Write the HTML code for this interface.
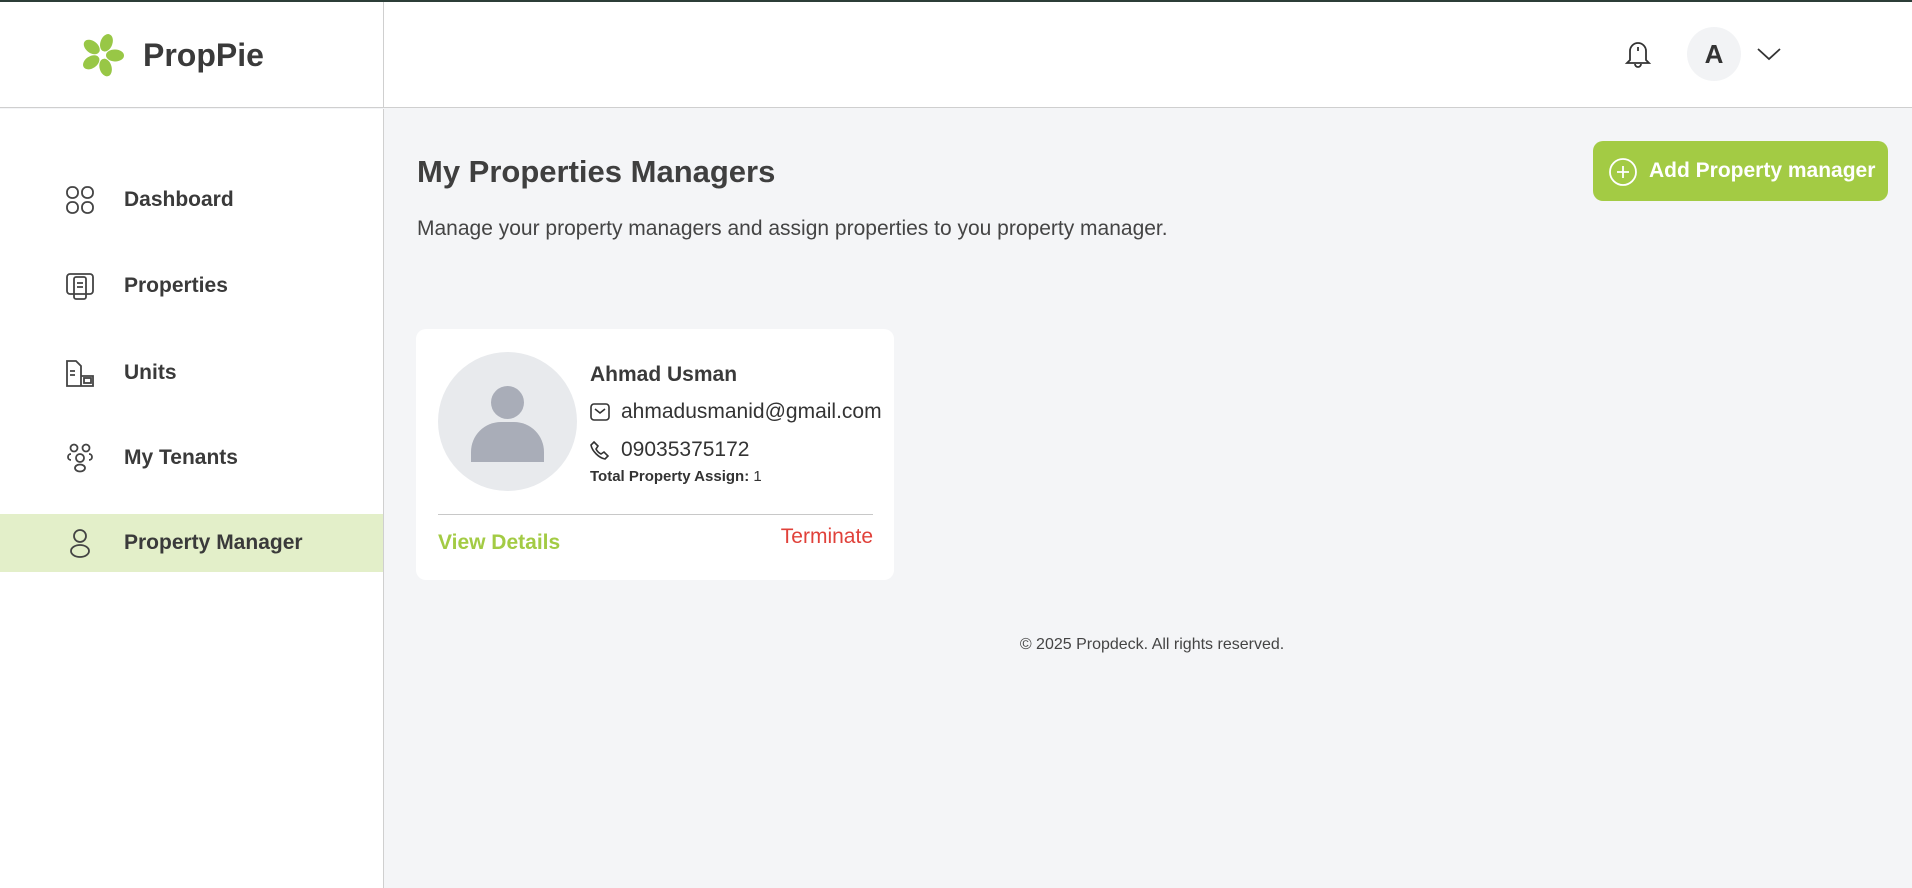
<!DOCTYPE html>
<html><head><meta charset="utf-8"><style>
*{box-sizing:border-box;margin:0;padding:0}
body{width:1912px;height:888px;overflow:hidden;background:#f4f5f7;font-family:"Liberation Sans",sans-serif;color:#3a3a3a;position:relative}
.topline{position:absolute;left:0;top:0;width:1912px;height:2px;background:#2c3e38}
.header{position:absolute;left:0;top:2px;width:1912px;height:106px;background:#fff;border-bottom:1px solid #cfcfcf}
.side{position:absolute;left:0;top:109px;width:384px;height:779px;background:#fff;border-right:1px solid #cfcfcf}
.hdiv{position:absolute;left:383px;top:2px;width:1px;height:106px;background:#cfcfcf}
.logo{position:absolute;left:143px;top:37px;font-size:32px;font-weight:600;color:#3a3a3a}
.nav{position:absolute;left:0;width:383px;height:58px;display:flex;align-items:center}
.nav svg{position:absolute;left:64px}
.nav span{position:absolute;left:124px;font-size:21px;font-weight:600;color:#3a3a3a}
.active{background:#e3efc9}
.abs{position:absolute}
</style></head><body>
<div class="topline"></div>
<div class="header"></div>
<div class="hdiv"></div>
<svg class="abs" style="left:80px;top:33px" width="44" height="44" viewBox="0 0 44 44">
<g fill="#98c746">
<ellipse cx="22" cy="9" rx="6" ry="9" transform="rotate(20 22 22)"/>
<ellipse cx="22" cy="9" rx="6" ry="9" transform="rotate(92 22 22)"/>
<ellipse cx="22" cy="9" rx="6" ry="9" transform="rotate(164 22 22)"/>
<ellipse cx="22" cy="9" rx="6" ry="9" transform="rotate(236 22 22)"/>
<ellipse cx="22" cy="9" rx="6" ry="9" transform="rotate(308 22 22)"/>
</g><circle cx="22" cy="22" r="4" fill="#fff"/></svg>
<div class="logo">PropPie</div>
<svg class="abs" style="left:1624px;top:38px" width="28" height="32" viewBox="0 0 28 32" fill="none" stroke="#333" stroke-width="1.8"><path d="M6 22V13a8 8 0 0116 0v9l3 3H3z"/><path d="M11 26a3 3 0 006 0"/><path d="M14 9v4"/></svg>
<div class="abs" style="left:1687px;top:27px;width:54px;height:54px;border-radius:50%;background:#f2f3f5;text-align:center;line-height:54px;font-size:26px;font-weight:600;color:#333">A</div>
<svg class="abs" style="left:1756px;top:46px" width="26" height="16" viewBox="0 0 26 16" fill="none" stroke="#333" stroke-width="1.8"><path d="M2 3l11 10 11-10"/></svg>
<div class="side"></div>
<div class="nav" style="top:171px"><svg width="32" height="32" viewBox="0 0 32 32" fill="none" stroke="#444" stroke-width="1.8"><rect x="3" y="3" width="11" height="11" rx="5"/><rect x="18" y="3" width="11" height="11" rx="5"/><rect x="3" y="18" width="11" height="11" rx="5"/><rect x="18" y="18" width="11" height="11" rx="5"/></svg><span>Dashboard</span></div>
<div class="nav" style="top:257px"><svg width="32" height="32" viewBox="0 0 32 32" fill="none" stroke="#444" stroke-width="1.8"><rect x="3" y="4" width="26" height="20" rx="3"/><rect x="10" y="7" width="12" height="22" rx="2"/><path d="M13 13h6M13 17h6"/></svg><span>Properties</span></div>
<div class="nav" style="top:344px"><svg width="32" height="32" viewBox="0 0 32 32" fill="none" stroke="#444" stroke-width="1.8"><path d="M3 29V4h9l5 5v20zM3 29h26V19H17"/><path d="M6 14h5M6 18h5"/><rect x="20" y="21" width="7" height="5"/></svg><span>Units</span></div>
<div class="nav" style="top:429px"><svg width="32" height="32" viewBox="0 0 32 32" fill="none" stroke="#444" stroke-width="1.8"><circle cx="10" cy="6" r="3.5"/><circle cx="22" cy="6" r="3.5"/><circle cx="16" cy="16" r="4"/><ellipse cx="16" cy="26" rx="5" ry="3.5"/><path d="M7 12c-4 0-4 6 0 6M25 12c4 0 4 6 0 6"/></svg><span>My Tenants</span></div>
<div class="nav active" style="top:514px"><svg width="32" height="32" viewBox="0 0 32 32" fill="none" stroke="#444" stroke-width="1.8"><circle cx="16" cy="9" r="6"/><ellipse cx="16" cy="24" rx="9" ry="6"/></svg><span>Property Manager</span></div>
<div class="abs" style="left:417px;top:154px;font-size:31px;font-weight:600;color:#3f3f3f">My Properties Managers</div>
<div class="abs" style="left:417px;top:217px;font-size:21px;color:#444">Manage your property managers and assign properties to you property manager.</div>
<div class="abs" style="left:1593px;top:141px;width:295px;height:60px;border-radius:10px;background:#a3cb44;color:#fff;font-size:21px;font-weight:700;line-height:60px;padding-left:56px;white-space:nowrap">Add Property manager</div>
<svg class="abs" style="left:1608px;top:157px" width="30" height="30" viewBox="0 0 30 30" fill="none" stroke="#fff" stroke-width="1.8"><circle cx="15" cy="15" r="13"/><path d="M15 9v12M9 15h12"/></svg>
<div class="abs" style="left:416px;top:329px;width:478px;height:251px;background:#fff;border-radius:10px"></div>
<div class="abs" style="left:438px;top:352px;width:139px;height:139px;border-radius:50%;background:#e8eaed;overflow:hidden">
<div class="abs" style="left:53px;top:34px;width:33px;height:33px;border-radius:50%;background:#a9adb8"></div>
<div class="abs" style="left:33px;top:70px;width:73px;height:40px;border-radius:30px 30px 0 0;background:#a9adb8"></div></div>
<div class="abs" style="left:590px;top:363px;font-size:21px;font-weight:700;color:#3a3a3a">Ahmad Usman</div>
<svg class="abs" style="left:590px;top:403px" width="20" height="18" viewBox="0 0 20 18" fill="none" stroke="#333" stroke-width="1.6"><rect x="1" y="1" width="18" height="16" rx="3"/><path d="M5 6l5 4 5-4"/></svg>
<div class="abs" style="left:621px;top:400px;font-size:21px;color:#333">ahmadusmanid@gmail.com</div>
<svg class="abs" style="left:590px;top:440px" width="20" height="20" viewBox="0 0 20 20" fill="none" stroke="#333" stroke-width="1.6"><path d="M4 2l4 4-2 3c1 2 3 4 5 5l3-2 4 4-3 3C9 18 2 11 1 5z"/></svg>
<div class="abs" style="left:621px;top:438px;font-size:21px;color:#333">09035375172</div>
<div class="abs" style="left:590px;top:468px;font-size:15px;color:#333"><b>Total Property Assign:</b> 1</div>
<div class="abs" style="left:438px;top:514px;width:435px;height:1px;background:#c8c8c8"></div>
<div class="abs" style="left:438px;top:531px;font-size:21px;font-weight:700;color:#a3cb44">View Details</div>
<div class="abs" style="left:700px;top:525px;width:173px;text-align:right;font-size:21px;color:#e0413a">Terminate</div>
<div class="abs" style="left:952px;top:636px;width:400px;text-align:center;font-size:16px;color:#444">© 2025 Propdeck. All rights reserved.</div>
</body></html>
